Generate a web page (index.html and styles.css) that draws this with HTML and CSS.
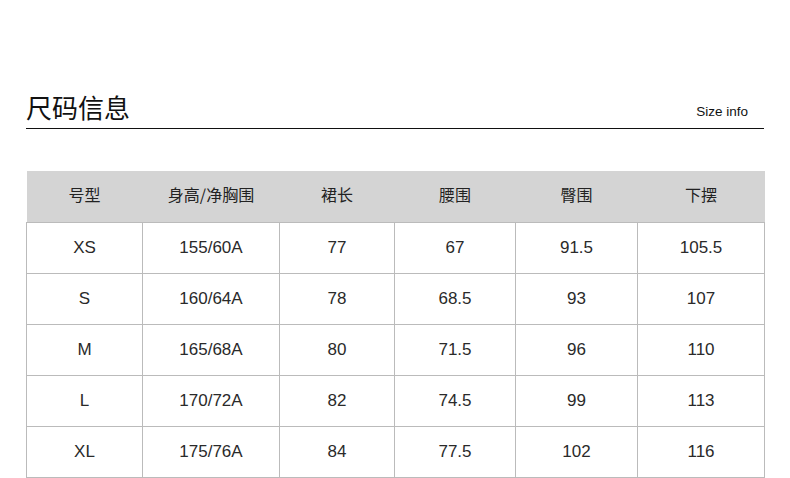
FILE: index.html
```html
<!DOCTYPE html>
<html lang="zh-CN">
<head>
<meta charset="utf-8">
<link rel="stylesheet" href="styles.css">
</head>
<body>
<div class="page">
  <div class="heading">
    <h1 class="title">尺码信息</h1>
    <span class="sub">Size info</span>
  </div>
  <table class="size-table">
    <colgroup>
      <col class="c1"><col class="c2"><col class="c3"><col class="c4"><col class="c5"><col class="c6">
    </colgroup>
    <thead>
      <tr><th>号型</th><th>身高/净胸围</th><th>裙长</th><th>腰围</th><th>臀围</th><th>下摆</th></tr>
    </thead>
    <tbody>
      <tr><td>XS</td><td>155/60A</td><td>77</td><td>67</td><td>91.5</td><td>105.5</td></tr>
      <tr><td>S</td><td>160/64A</td><td>78</td><td>68.5</td><td>93</td><td>107</td></tr>
      <tr><td>M</td><td>165/68A</td><td>80</td><td>71.5</td><td>96</td><td>110</td></tr>
      <tr><td>L</td><td>170/72A</td><td>82</td><td>74.5</td><td>99</td><td>113</td></tr>
      <tr><td>XL</td><td>175/76A</td><td>84</td><td>77.5</td><td>102</td><td>116</td></tr>
    </tbody>
  </table>
</div>
</body>
</html>
```
FILE: styles.css
```css
html, body {
  margin: 0;
  padding: 0;
  background: #fff;
}
.page {
  width: 738px;
  padding: 90px 0 0 26px;
  font-family: "Liberation Sans", "Noto Sans CJK SC", sans-serif;
  color: #222;
}
.heading {
  display: flex;
  justify-content: space-between;
  align-items: flex-end;
  border-bottom: 1px solid #111;
  height: 38px;
  padding-right: 16px;
}
.title {
  margin: 0;
  padding-bottom: 4px;
  font-family: "Noto Sans CJK SC", sans-serif;
  font-weight: 400;
  font-size: 26px;
  line-height: 34px;
  color: #111;
}
.sub {
  font-size: 13.5px;
  line-height: 16px;
  padding-bottom: 8px;
  color: #111;
}
.size-table {
  margin-top: 42px;
  width: 738px;
  border-collapse: collapse;
  table-layout: fixed;
}
.c1 { width: 116px; }
.c2 { width: 137px; }
.c3 { width: 115px; }
.c4 { width: 121px; }
.c5 { width: 122px; }
.c6 { width: 127px; }
.size-table th {
  background: #d4d4d4;
  height: 51px;
  padding: 0 0 5px;
  box-sizing: border-box;
  font-family: "Noto Sans CJK SC", sans-serif;
  font-weight: 400;
  font-size: 16px;
  color: #222;
  text-align: center;
}
.size-table td {
  height: 50px;
  padding: 0;
  border: 1px solid #bbb;
  font-size: 17px;
  color: #2a2a2a;
  text-align: center;
}
```
